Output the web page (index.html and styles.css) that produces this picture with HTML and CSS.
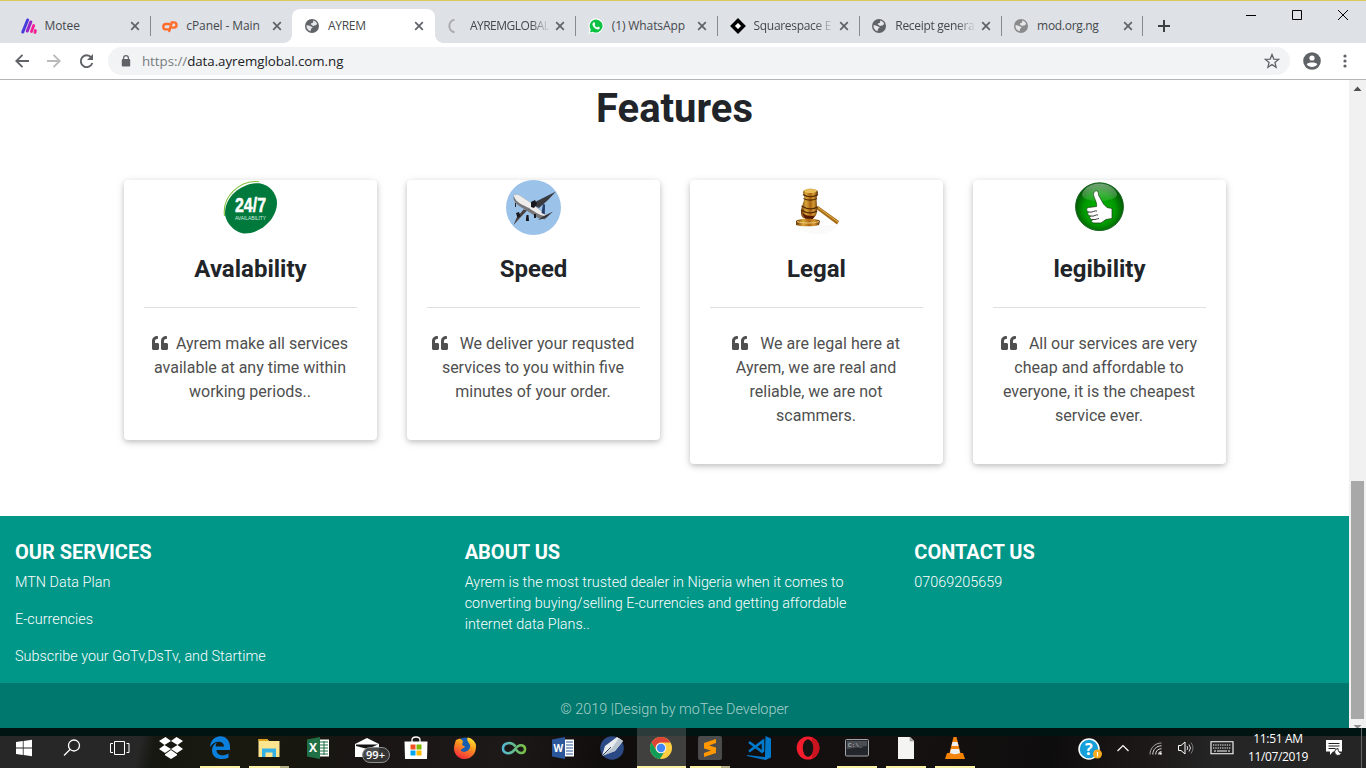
FILE: index.html
```html
<!DOCTYPE html>
<html lang="en">
<head>
<meta charset="utf-8">
<title>AYREM</title>
<link rel="stylesheet" href="styles.css">
</head>
<body>
<svg class="defs" width="0" height="0">
  <defs>
    <symbol id="x" viewBox="0 0 10 10"><path d="M1.200 1.200l7.600 7.600M8.800 1.200l-7.600 7.600" stroke="#5f6368" stroke-width="1.700" fill="none"/></symbol>
    <symbol id="globe" viewBox="0 0 14 14"><circle cx="7" cy="7" r="7" fill="currentColor"/><path d="M8.300 1.600c2 .5 3.300 1.800 3.900 3.400-1 .4-1.200 1.600-2.400 1.600-.9 0-1 .5-1.800.3-1-.2-.6-1.300-1.600-1.200-.8 0-1.200-.7-.3-1.200.8-.3 1.500.1 1.700-.7.100-.7.600-1 .5-2.200z" fill="#e4e6ea"/><path d="M1.500 6.300C3 6.300 4.500 6.600 5.500 7.200c.8.500 2 .3 2.100 1.100 0 1-1.300.7-1.500 1.700-.1.800-.6 1.300-.5 2.300-2.700-.7-4.400-3.200-4.100-6z" fill="#e4e6ea"/></symbol>
    <symbol id="quote" viewBox="0 0 512 512"><path fill="#4f4f4f" d="M464 256h-80v-64c0-35.300 28.700-64 64-64h8c13.300 0 24-10.700 24-24V56c0-13.300-10.700-24-24-24h-8c-88.400 0-160 71.600-160 160v240c0 26.500 21.500 48 48 48h128c26.500 0 48-21.500 48-48V304c0-26.500-21.500-48-48-48zm-288 0H96v-64c0-35.300 28.700-64 64-64h8c13.300 0 24-10.700 24-24V56c0-13.300-10.700-24-24-24h-8C71.600 32 0 103.600 0 192v240c0 26.500 21.500 48 48 48h128c26.500 0 48-21.500 48-48V304c0-26.500-21.500-48-48-48z"/></symbol>
    <linearGradient id="motee" x1="0" x2="1"><stop offset="0" stop-color="#3a3fe0"/><stop offset=".5" stop-color="#a329c4"/><stop offset="1" stop-color="#ff1f95"/></linearGradient>
    <linearGradient id="gold" x1="0" x2="1"><stop offset="0" stop-color="#6a3907"/><stop offset=".3" stop-color="#dba63a"/><stop offset=".55" stop-color="#a96412"/><stop offset=".75" stop-color="#d69a31"/><stop offset="1" stop-color="#5a2d04"/></linearGradient>
    <radialGradient id="green" cy=".55"><stop offset="0" stop-color="#00b400"/><stop offset=".65" stop-color="#009a00"/><stop offset="1" stop-color="#035d06"/></radialGradient>
    <linearGradient id="shine" x2="0" y2="1"><stop offset="0" stop-color="#fff" stop-opacity=".45"/><stop offset="1" stop-color="#fff" stop-opacity=".1"/></linearGradient>
    <linearGradient id="fox" x1=".8" x2=".3" y2="1"><stop offset="0" stop-color="#ffe83a"/><stop offset=".4" stop-color="#ff9a1e"/><stop offset="1" stop-color="#f5263d"/></linearGradient>
    <linearGradient id="loop" x1="0" x2="1"><stop offset="0" stop-color="#53b9d3"/><stop offset="1" stop-color="#7ac043"/></linearGradient>
  </defs>
</svg>

<header class="tabs">
  <div class="tab sep">
    <svg class="fav" viewBox="0 0 16 16"><path d="M1.800 14L6.600 2" stroke="#4a3bdd" stroke-width="3" stroke-linecap="round"/><path d="M6.300 13L9.800 4" stroke="#9a24c8" stroke-width="3" stroke-linecap="round"/><path d="M10.500 13.500L12.700 7.500M14 14.500L14.400 12.500" stroke="#f51f96" stroke-width="2.800" stroke-linecap="round"/></svg>
    <span class="name">Motee</span><svg class="close"><use href="#x"/></svg>
  </div>
  <div class="tab">
    <svg class="fav" viewBox="0 0 16 16"><path d="M7 6H4a2.700 2.700 0 0 0 0 5.400h2.300M7.300 13L9.800 4.400h2.100a2.600 2.600 0 0 1 0 5.200h-1.500" fill="none" stroke="#ff6c2c" stroke-width="2.400" stroke-linecap="round"/></svg>
    <span class="name">cPanel - Main</span><svg class="close"><use href="#x"/></svg>
  </div>
  <div class="tab active">
    <svg class="fav globe" viewBox="-1 -1 16 16"><use href="#globe" width="14" height="14"/></svg>
    <span class="name tight">AYREM</span><svg class="close"><use href="#x"/></svg>
  </div>
  <div class="tab sep">
    <svg class="fav" viewBox="0 0 16 16"><path d="M8.500 1.800a6.300 6.300 0 0 0 0 12.400" fill="none" stroke="#a9abae" stroke-width="2"/></svg>
    <span class="name fade tighter">AYREMGLOBAL</span><svg class="close"><use href="#x"/></svg>
  </div>
  <div class="tab sep">
    <svg class="fav" viewBox="0 0 16 16"><path d="M8 .3a7.600 7.600 0 1 1-3.300 14.500L.5 16l1-4.300A7.600 7.600 0 0 1 8 .3z" fill="#fff"/><path d="M8 1.500a6.500 6.500 0 1 1-3.100 12.200L2 14.500l.8-2.900A6.500 6.500 0 0 1 8 1.500z" fill="#0dc143"/><path d="M5.400 4.500c.5-.5 1-.4 1.200.1l.6 1.300c.1.500-.8 1-.6 1.300.5 1 1.300 1.800 2.400 2.200.4.100.8-1 1.200-.8l1.500.8c.5.400-.1 1.700-1.200 2-2.500.5-6-2.700-6-5.200 0-.7.400-1.300.9-1.700z" fill="#fff"/></svg>
    <span class="name">(1) WhatsApp</span><svg class="close"><use href="#x"/></svg>
  </div>
  <div class="tab sep">
    <svg class="fav" viewBox="0 0 16 16"><path d="M8 2.500L13.500 8 8 13.500 2.500 8z" fill="#fff" stroke="#000" stroke-width="3.400"/></svg>
    <span class="name fade tight">Squarespace E</span><svg class="close"><use href="#x"/></svg>
  </div>
  <div class="tab sep">
    <svg class="fav globe" viewBox="-1 -1 16 16"><use href="#globe" width="14" height="14"/></svg>
    <span class="name fade tight">Receipt genera</span><svg class="close"><use href="#x"/></svg>
  </div>
  <div class="tab sep">
    <svg class="fav globe light" viewBox="-1 -1 16 16"><use href="#globe" width="14" height="14"/></svg>
    <span class="name tight">mod.org.ng</span><svg class="close"><use href="#x"/></svg>
  </div>
  <svg class="plus" viewBox="0 0 12 12"><path d="M6 0v12M0 6h12" stroke="#3c4043" stroke-width="2"/></svg>
  <svg class="winctl" viewBox="0 0 104 12"><path d="M0 6.500h10M46.500 1.500h9v9h-9zM92 1l10 10M102 1L92 11" fill="none" stroke="#000"/></svg>
</header>

<div class="toolbar">
  <svg class="nav" viewBox="0 0 80 16"><g fill="none" stroke-width="1.900"><path d="M14 8H1.500M7.500 1.800L1.300 8l6.200 6.200" stroke="#5f6368"/><path d="M32 8h12.500M38.500 1.800L44.700 8l-6.200 6.200" stroke="#bababd"/><path d="M76.300 4.500A5.900 5.900 0 1 0 77.300 10" stroke="#5f6368"/></g><path d="M78 1v6h-6z" fill="#5f6368"/></svg>
  <div class="omnibox">
    <svg class="lock" viewBox="0 0 10 12"><rect x=".8" y="4" width="8.400" height="7.600" rx="1" fill="#5f6368"/><path d="M2.600 4.500V3a2.400 2.400 0 0 1 4.800 0v1.500" fill="none" stroke="#5f6368" stroke-width="1.200"/></svg>
    <span class="url"><i>https://</i>data.ayremglobal.com.ng</span>
    <svg class="star" viewBox="0 0 16 16"><path d="M8 1.600l1.800 4.500 4.800.3-3.700 3.100 1.200 4.700L8 11.600l-4.100 2.600 1.200-4.700L1.400 6.400l4.800-.3z" fill="none" stroke="#5f6368" stroke-width="1.300"/></svg>
  </div>
  <svg class="user" viewBox="0 0 18 18"><circle cx="9" cy="9" r="8.800" fill="#5f6368"/><circle cx="9" cy="6" r="2.600" fill="#fff"/><path d="M3.700 12.300C4.500 9.900 13.500 9.900 14.300 12.300 12 16 6 16 3.700 12.300z" fill="#fff"/></svg>
  <svg class="dots" viewBox="0 0 4 14"><g fill="#5f6368"><circle cx="2" cy="2" r="1.600"/><circle cx="2" cy="7" r="1.600"/><circle cx="2" cy="12" r="1.600"/></g></svg>
</div>

<div class="view">
  <main class="page">
    <section class="features">
      <h1>Features</h1>
      <div class="cards">
        <article class="card">
          <svg class="pic" viewBox="0 0 55 55"><path d="M1.500 36C-1 16 17 0 36 1.700" fill="none" stroke="#86c13e" stroke-width="1.100"/><path d="M34.500 3.300C45 3.300 54 13 54 23c0 14-14 30-32 30.500C13 53.500 2 43 2 33 2 16 19 3.300 34.500 3.300z" fill="#007a3c"/><text x="12" y="32" class="big247" textLength="31" lengthAdjust="spacingAndGlyphs">24/7</text><text x="12" y="40" class="small247" textLength="31" lengthAdjust="spacingAndGlyphs">AVAILABILITY</text></svg>
          <h2>Avalability</h2><hr>
          <p><svg class="quote near"><use href="#quote"/></svg>Ayrem make all services<br>available at any time within<br>working periods..</p>
        </article>
        <article class="card">
          <svg class="pic" viewBox="0 0 55 55"><circle cx="27.500" cy="27.500" r="27.500" fill="#9bc2e9"/><path d="M25 24l7-3.500L50 11.500 42 20l-9 8z" fill="#3a3b40"/><path d="M8 15.500c2-2 5-1 8 1.500l9 6 8 6.500 8 5.500-2 4.500-7-1.500-9-6-9-5.500C10 24 6 19.500 8 15.500z" fill="#77777b"/><path d="M8 15.500c2-2 5-1 8 1.500l9 6 8 6.500 7 5-1 1.500c-7-1-11-5-16-8-6-3-13-5.500-15-11.500z" fill="#eeedeb"/><path d="M35.500 33l1.500-9 2 .5-.2 10z" fill="#263c6a"/><path d="M32 40l4-3 11-5.500-7 6.500z" fill="#36363b"/><path d="M21 30.500L12 40l-4.500 5 3-7 7-8.500z" fill="#47403f"/><path d="M25 22l4-2 2 4-3 4-3-1zM10 33l3-1 1.500 4-3 2zM20.500 35h2l.5 6h-3v-2zM28 34l2 0 0 4-2 0z" fill="#17171d"/><path d="M9.500 23v4" stroke="#222"/></svg>
          <h2>Speed</h2><hr>
          <p><svg class="quote"><use href="#quote"/></svg>We deliver your requsted<br>services to you within five<br>minutes of your order.</p>
        </article>
        <article class="card">
          <svg class="pic" viewBox="0 0 55 55"><path d="M7 45h42c-9 12-32 13-42 0z" fill="#fafafa"/><path d="M26 28l3-2 21 15-2 3.500z" fill="#a76b17"/><path d="M29 27.500l20 14.500" stroke="#e5b44c" stroke-width="1"/><path d="M14 12.500c0-5 15-5 15 0l-1.500 6 .5 8c1 4-.5 10-4 12h-9c-3-2-4-6-2-12l2.500-8z" fill="url(#gold)"/><path d="M13.500 33c3 3 10 4 13 2l-3 4.500h-6c-2-1-3-3-4-6.500z" fill="#571806"/><ellipse cx="21.500" cy="11" rx="6.300" ry="2" fill="#e8bf59"/><path d="M14 14.500c4 3 11 3 15 0M14.500 18.500c4 2 9 2 13.500 0M12.500 26c5 3 11 4 16 1M12 30c5 3 11 4 16 1" fill="none" stroke="#542a04" stroke-width="1.200"/><path d="M7 41c2-3 22-3 24 0l-1 4c-4 1.700-19 1.700-23 0z" fill="url(#gold)"/><path d="M8 41.500c5 2 17 2 22 0" fill="none" stroke="#f2cd76"/></svg>
          <h2>Legal</h2><hr>
          <p><svg class="quote"><use href="#quote"/></svg>We are legal here at<br>Ayrem, we are real and<br>reliable, we are not<br>scammers.</p>
        </article>
        <article class="card">
          <svg class="pic" viewBox="0 0 55 55"><circle cx="27.500" cy="26.700" r="23.900" fill="url(#green)" stroke="#12611a" stroke-width="1"/><path d="M10 14c5-14 30-14 35 0 1 9-36 10-35 0z" fill="url(#shine)"/><path d="M23.500 11c2.500-1 3 2 3 4l5 9 3.500 3.500 5 1v10l-6 1-5 3.500h-7c-3 0-3-3-1-3.500-4 0-4-3-2-3.500-4-.5-4-3.500-2-4-3-.5-3-4-.5-4.500l8-1c1-4-3-9-3-12 0-1.500.5-2.500 2-3.500z" fill="#fff" stroke="#183b14" stroke-width=".7"/><path d="M17 32c3 1 6-2 8-1M19 36c3 1 5-2 7-1M21 39.500c3 .5 4-1 6-1" fill="none" stroke="#222" stroke-width=".9"/></svg>
          <h2>legibility</h2><hr>
          <p><svg class="quote"><use href="#quote"/></svg>All our services are very<br>cheap and affordable to<br>everyone, it is the cheapest<br>service ever.</p>
        </article>
      </div>
    </section>
    <footer>
      <div class="cols">
        <div><h5>OUR SERVICES</h5><p>MTN Data Plan</p><p>E-currencies</p><p>Subscribe your GoTv,DsTv, and Startime</p></div>
        <div><h5>ABOUT US</h5><p>Ayrem is the most trusted dealer in Nigeria when it comes to<br>converting buying/selling E-currencies and getting affordable<br>internet data Plans..</p></div>
        <div><h5>CONTACT US</h5><p>07069205659</p></div>
      </div>
      <div class="copy">© 2019 |Design by moTee Developer</div>
    </footer>
  </main>
  <div class="scroll">
    <svg viewBox="0 0 17 17"><path d="M4.500 11h8L8.500 6.500z" fill="#505050"/></svg>
    <div class="thumb"></div>
    <svg class="down" viewBox="0 0 17 9"><path d="M4.500 6h8L8.500 10z" fill="#909090"/></svg>
  </div>
</div>

<div class="taskbar">
  <div class="sys"><svg viewBox="0 0 32 32"><path d="M8 10l6.800-1v6.500H8zM15.600 8.900L24 7.800v7.700h-8.400zM8 16.400h6.800v6.500L8 22zM15.600 16.400H24v7.800L15.600 23z" fill="#fff"/></svg></div>
  <div class="sys"><svg viewBox="0 0 32 32"><circle cx="18" cy="13.500" r="5.500" fill="none" stroke="#fff" stroke-width="1.300"/><path d="M14 17.500L8 23.500" stroke="#fff" stroke-width="1.300"/></svg></div>
  <div class="sys"><svg viewBox="0 0 32 32"><path d="M10.500 9.500h10v13h-10zM9 11.500H6.500v9H9M22.500 11.500H25v9h-2.500" fill="none" stroke="#fff"/></svg></div>
  <div class="app"><svg viewBox="0 0 32 32"><path d="M10.500 5L4 9l5.500 4L16 9zM21.500 5L16 9l6.500 4L28 9zM4 17l6 4 6-4-6.500-4zM22.500 13L16 17l6 4 6-4zM10 22.300l6-4.200 6 4.200v1L16 27l-6-3.700z" fill="#fff"/></svg></div>
  <div class="app run"><svg viewBox="0 0 32 32"><path d="M6 15C7 1 25 1 26 14v4H12.500c0 6 7.500 6.500 12 3.500v4.200C17 29 8 26.500 8 18.500c0-4 2-6.500 5-8-1 1.500-1.300 2.500-1.300 4H20c.2-6-9.500-7-14 .5z" fill="#0b7fdc"/></svg></div>
  <div class="app run multi"><svg viewBox="0 0 32 32"><path d="M5.500 7h8.500l2 2h10.500v16h-21z" fill="#ffe590"/><path d="M5.500 7H14l2 2H5.500z" fill="#d9a320"/><path d="M9 25v-8.500h14V25h-3.500v-4.500h-7V25z" fill="#35b1e6"/></svg></div>
  <div class="app"><svg viewBox="0 0 32 32"><path d="M16 7.500h11v17H16z" fill="#fff"/><path d="M18 10h8M18 13h8M18 16h8M18 19h8M18 22h8M22 9v14" stroke="#1f7145"/><path d="M5 7.500L18 5v22L5 24.500z" fill="#1f7145"/><text x="7" y="20" class="office">X</text></svg></div>
  <div class="app"><svg viewBox="0 0 32 32"><path d="M4 12l12-6 12 6v13H4z" fill="#fff"/><path d="M5 12.500h22L16.500 17 5 14z" fill="#161313"/></svg><span class="badge">99+</span></div>
  <div class="app"><svg viewBox="0 0 32 32"><path d="M12 11V8c0-4 8-4 8 0v3" fill="none" stroke="#fff" stroke-width="1.300"/><path d="M4.500 9.500h23L27 27H5z" fill="#fff"/><path d="M10.500 12.500h5v5h-5z" fill="#f25022"/><path d="M16.500 12.500h5v5h-5z" fill="#7fba00"/><path d="M10.500 18.500h5v5h-5z" fill="#00a4ef"/><path d="M16.500 18.500h5v5h-5z" fill="#ffb900"/></svg></div>
  <div class="app"><svg viewBox="0 0 32 32"><circle cx="16" cy="15" r="9.500" fill="#175eb0"/><path d="M7 8l4-1.500 3 2.500-1 4 3 1.500c-1 2-4 2-4 4 2 3 8 1 9-3 1-5-4-5-2.500-10 4 .5 7.500 3.500 8.500 7.500C28 31 6 31 5 17c0-4 1-6 2-9z" fill="url(#fox)"/></svg></div>
  <div class="app"><svg viewBox="0 0 32 32"><path d="M17.500 14.500C13.500 9 5 10.500 5 16.300c0 6 8 6.500 11.500 1.500 2.500-3.500 5-5.500 8-4.300 4 1.500 3 8-1.500 7.500-2.500 0-4-2-5.500-4" fill="none" stroke="url(#loop)" stroke-width="2.500"/></svg></div>
  <div class="app"><svg viewBox="0 0 32 32"><path d="M16 7.500h11v17H16z" fill="#fff"/><path d="M19 10h7M19 13h7M19 16h7M19 19h7M19 22h7" stroke="#2b579a"/><path d="M5 7.500L18 5v22L5 24.500z" fill="#2b579a"/><text x="6.500" y="19.500" class="office word">W</text></svg></div>
  <div class="app"><svg viewBox="0 0 32 32"><circle cx="16" cy="16" r="11.800" fill="#2b4a85"/><path d="M6 24l3-10L21 5l6 4-8 10z" fill="#e8ecef"/><path d="M6 24l10-8 7-10 4 3-8 10z" fill="#b9c4cf"/><path d="M6 24l9-9" stroke="#33415c"/></svg></div>
  <div class="app run focus"><svg viewBox="0 0 32 32"><circle cx="16" cy="16" r="11" fill="#ffcd40"/><path d="M6.500 10.500A11 11 0 0 1 25.500 10.500H16a5.500 5.500 0 0 0-5 7.700z" fill="#db4437"/><path d="M6.500 10.500A11 11 0 0 0 15 27l5-8.500a5 5 0 0 1-8.700 0z" fill="#0f9d58"/><circle cx="16" cy="16" r="5.300" fill="#f1f1f1"/><circle cx="16" cy="16" r="4.200" fill="#4285f4"/></svg></div>
  <div class="app run multi"><svg viewBox="0 0 32 32"><rect x="4" y="4" width="24" height="24" rx="2" fill="#4b4b4b"/><path d="M10 11l12-4v4l-7 2.500 7 2v5.500l-12 4v-4l7-2.500-7-2z" fill="#ff9800"/></svg></div>
  <div class="app"><svg viewBox="0 0 32 32"><path d="M22.500 4L28 6.500v19L22.500 28 4 24v-1l18 2z" fill="#0179cb"/><path d="M6 10l14 10.500M6 19.500L20 9v11" stroke="#0179cb" stroke-width="2.600" fill="none"/></svg></div>
  <div class="app"><svg viewBox="0 0 32 32"><ellipse cx="16" cy="16" rx="11.300" ry="11.500" fill="#f51d2d"/><path d="M20 5.500c10 4 10 17 0 21z" fill="#c9141f"/><ellipse cx="16" cy="16" rx="5.200" ry="8.700" fill="#161313"/></svg></div>
  <div class="app run"><svg viewBox="0 0 32 32"><rect x="4.500" y="7.500" width="23" height="16.500" rx="1" fill="#23262b" stroke="#a1a5a8"/><path d="M6 9h20v5L6 17z" fill="#4a4d51"/><text x="7" y="15" class="term">C:\_</text></svg></div>
  <div class="app run"><svg viewBox="0 0 32 32"><path d="M8 5h12l4 4v18H8z" fill="#f4f4f3"/><path d="M20 5v4h4" fill="#aaa" stroke="#999" stroke-width=".7"/></svg></div>
  <div class="app run"><svg viewBox="0 0 32 32"><path d="M8 21h16l2 6H6z" fill="#f58300"/><path d="M14.500 5h3L22 23c-3 2-9 2-12 0z" fill="#f48410"/><path d="M13.500 10h5l1 4h-7zM12 17h8l1 4c-3 1.500-7 1.500-10 0z" fill="#eee"/></svg></div>

  <div class="tray">
    <svg class="help" viewBox="0 0 24 24"><circle cx="11" cy="12" r="10" fill="#169fd9" stroke="#fff" stroke-width="1.500"/><text x="7" y="18" class="qmark">?</text><circle cx="19.500" cy="17" r="4.500" fill="#f5a91d"/><path d="M19.500 15v4.500" stroke="#fff" stroke-width="1.300"/></svg>
    <svg class="chev" viewBox="0 0 14 14"><path d="M1.500 10L7 4.500l5.500 5.500" fill="none" stroke="#fff" stroke-width="1.200"/></svg>
    <svg class="wifi" viewBox="0 0 16 16"><g fill="none" stroke="#ddd"><path d="M2 14.500C2 8 7 3 13.500 3" opacity=".7"/><path d="M4.800 14.500c0-5 3.700-8.700 8.700-8.700M7.700 14.500c0-3.500 2.300-5.800 5.800-5.800M10.500 14.500c0-2 1-3 3-3"/></g><circle cx="12.500" cy="13.500" r="1.300" fill="#fff"/></svg>
    <svg class="vol" viewBox="0 0 18 16"><path d="M1.500 5.500H4l4-3.500v12L4 10.500H1.500z" fill="none" stroke="#fff"/><path d="M10 6q1.500 2 0 4M12 4.500q3 3.500 0 7" fill="none" stroke="#ddd"/><path d="M14 2.500q4 5.500 0 11" fill="none" stroke="#777"/></svg>
    <svg class="kbd" viewBox="0 0 24 14"><path d="M1 .8h22v12H1z" fill="none" stroke="#fff" stroke-width="1.100"/><path d="M3 4h18M3 7h18" stroke="#fff" stroke-width="1.200" stroke-dasharray="1.300 1"/><path d="M4 10h2M7 10h10M18 10h2" stroke="#fff"/></svg>
    <div class="clock"><span>11:51 AM</span><span>11/07/2019</span></div>
    <svg class="note" viewBox="0 0 18 18"><path d="M1 1h16v11.500H8L5 16v-3.500H1z" fill="#fff"/><path d="M3.500 4.500h11M3.500 7h11M3.500 9.500h7" stroke="#222" stroke-width="1"/><path d="M13 9.500a3.500 3.500 0 1 0 3.500 4.500c-2.500 0-3.500-2-3.500-4.500z" fill="#fff" stroke="#222"/></svg>
    <div class="peek"></div>
  </div>
</div>
</body>
</html>
```
FILE: styles.css
```css
* { box-sizing: border-box; }
body { margin: 0; width: 1366px; height: 768px; overflow: hidden; display: flex; flex-direction: column; background: #fff; font-family: Roboto, "Liberation Sans", sans-serif; }
svg { flex: none; }
.defs { position: absolute; }

.tabs { height: 43px; flex: none; display: flex; background: #dee1e6; border-top: 1px solid #dbc85f; padding: 8px 0 0 9px; font: 12px/34px "Open Sans", "Noto Sans", sans-serif; color: #45494d; }
.tab { width: 141.800px; height: 34px; flex: none; display: flex; align-items: center; padding: 0 10.800px 0 11.500px; position: relative; }
.tab.sep::after { content: ""; position: absolute; right: 0; top: 7px; width: 1px; height: 20px; background: #868b90; }
.tab.active { width: 143px; margin: 0 -.600px; background: #fff; border-radius: 8px 8px 0 0; padding-left: 12px; }
.tab.active::before, .tab.active::after { content: ""; position: absolute; bottom: 0; width: 8px; height: 8px; }
.tab.active::before { left: -8px; background: radial-gradient(circle at 0 0, transparent 7.500px, #fff 8px); }
.tab.active::after { right: -8px; background: radial-gradient(circle at 100% 0, transparent 7.500px, #fff 8px); }
.fav { width: 16px; height: 16px; margin-right: 8px; }
.globe { color: #5f6368; }
.globe.light { color: #8a8a8a; }
.name { flex: 1; white-space: nowrap; letter-spacing: -.1px; }
.fade { -webkit-mask-image: linear-gradient(90deg, #000 76%, transparent 100%); mask-image: linear-gradient(90deg, #000 76%, transparent 100%); margin-right: 5px; }
.tight { letter-spacing: -.3px; }
.tighter { letter-spacing: -.5px; }
.close { width: 10px; height: 10px; }
.plus { width: 12px; height: 12px; margin: 11px 0 0 15px; }
.winctl { width: 104px; height: 12px; margin: 0 16px 0 auto; }

.toolbar { height: 37px; flex: none; display: flex; align-items: center; border-bottom: 1px solid #b4b5b7; padding-left: 15px; }
.nav { width: 80px; height: 16px; }
.omnibox { width: 1182px; height: 28px; border-radius: 14px; background: #f1f3f4; margin-left: 13px; display: flex; align-items: center; padding: 0 10px 0 13px; }
.lock { width: 10px; height: 12px; margin-right: 11px; }
.url { flex: 1; font: 13.300px/28px "Open Sans", "Noto Sans", sans-serif; letter-spacing: -.030px; color: #202124; }
.url i { font-style: normal; color: #777b80; }
.star { width: 16px; height: 16px; }
.user { width: 18px; height: 18px; margin-left: 13px; }
.dots { width: 4px; height: 14px; margin-left: 22px; }

.view { height: 648px; flex: none; display: flex; }
.page { width: 1349px; display: flex; flex-direction: column; }
.features { height: 436px; padding: 5px 0 0 124px; }
h1 { width: 1101px; margin: 0 0 47px; font-size: 40px; line-height: 48px; font-weight: 700; text-align: center; color: #212529; }
.cards { display: grid; grid-template-columns: repeat(4, 253px); gap: 30px; align-items: start; }
.card { border-radius: 4px; padding: 0 20px 36px; display: flex; flex-direction: column; align-items: center; background: #fff; box-shadow: 0 2px 5px rgba(0,0,0,.16), 0 2px 10px rgba(0,0,0,.12); }
.pic { width: 55px; height: 55px; }
.card h2 { margin: 20px 0 23px; font-size: 24px; line-height: 29px; font-weight: 700; color: #212529; }
.card hr { width: 213px; height: 1px; margin: 0 0 24px; border: 0; background: #e0e0e0; }
.card p { margin: 0 1px 0 0; font-size: 16px; line-height: 24px; text-align: center; white-space: nowrap; color: #4f4f4f; }
.quote { width: 16px; height: 16px; margin-right: 12px; vertical-align: -2px; }
.quote.near { margin-right: 8px; }
.big247 { font: 700 21px "Liberation Sans", sans-serif; fill: #fff; stroke: #fff; stroke-width: .5px; }
.small247 { font: 6px "Liberation Sans", sans-serif; fill: #d8ede0; }

footer { color: #fff; background: #009688; }
.cols { height: 167px; display: grid; grid-template-columns: repeat(3, 449.670px); padding-top: 24px; }
.cols > div { padding-left: 15px; }
h5 { margin: 0 0 8px; font-size: 20px; line-height: 24px; font-weight: 700; }
.cols p { margin: 0 0 16px; font-size: 14.400px; line-height: 21px; font-weight: 300; white-space: nowrap; }
.copy { height: 45px; background: #00786d; text-align: center; font-size: 14.400px; line-height: 53px; font-weight: 300; color: rgba(255,255,255,.66); overflow: hidden; }
.scroll { width: 17px; background: #f1f1f1; display: flex; flex-direction: column; align-items: center; }
.scroll svg { width: 17px; height: 17px; }
.scroll .thumb { width: 13px; height: 238px; margin-top: 384px; background: #a8a8a8; }
.scroll .down { height: 9px; }

.taskbar { height: 40px; flex: none; display: flex; color: #fff; background: linear-gradient(#001411 0 8px, transparent 8px), linear-gradient(100deg, #272727 0 140px, #161811 155px, #19190f 230px, #17170f 310px, #191515 360px, #1d1918 500px, #100d0d 600px, #161111 900px, #0e0d0d 1040px, #1c1817 1130px, #252525 1200px); }
.sys, .app { position: relative; height: 40px; flex: none; display: flex; justify-content: center; padding-top: 4px; }
.sys { width: 48px; }
.app { width: 49px; }
.sys + .app { margin-left: 2.500px; }
.sys svg, .app svg { width: 32px; height: 32px; }
.run::after { content: ""; position: absolute; left: 4.500px; bottom: 0; width: 40px; height: 2px; background: #fbf1a5; }
.sys + .sys + .sys + .app { margin-left: 2.500px; }
.multi::after { background: linear-gradient(90deg, #fbf1a5 31px, #b5ae82 31px); }
.focus { background: #40403f; box-shadow: inset 0 8px #2b3b39; }
.focus::after { left: 0; width: 49px; }
.badge { position: absolute; left: 19px; top: 19px; width: 28px; height: 16px; border: 1px solid #8d8d8d; border-radius: 9px; background: rgba(55,55,55,.9); font: 600 11px/14px "Open Sans", sans-serif; text-align: center; }
.office { font: 700 12px "Open Sans", sans-serif; fill: #fff; }
.word { font-size: 10px; }
.term { font: 6px "Liberation Mono", monospace; fill: #ccc; }
.qmark { font: 700 16px "Open Sans", sans-serif; fill: #fff; }
.tray { margin-left: auto; display: flex; align-items: center; height: 40px; }
.help { width: 24px; height: 24px; margin-top: 2px; }
.chev { width: 14px; height: 14px; margin-left: 14px; }
.wifi { width: 16px; height: 16px; margin-left: 18px; }
.vol { width: 18px; height: 16px; margin-left: 13px; }
.kbd { width: 24px; height: 14px; margin-left: 15px; }
.clock { width: 72px; margin-left: 8px; display: flex; flex-direction: column; align-items: center; font: 12px/18px "Open Sans", "Noto Sans", sans-serif; letter-spacing: -.350px; }
.note { width: 18px; height: 18px; margin-left: 11px; }
.peek { width: 5px; height: 40px; margin-left: 18px; border-left: 1px solid #666; }
```
